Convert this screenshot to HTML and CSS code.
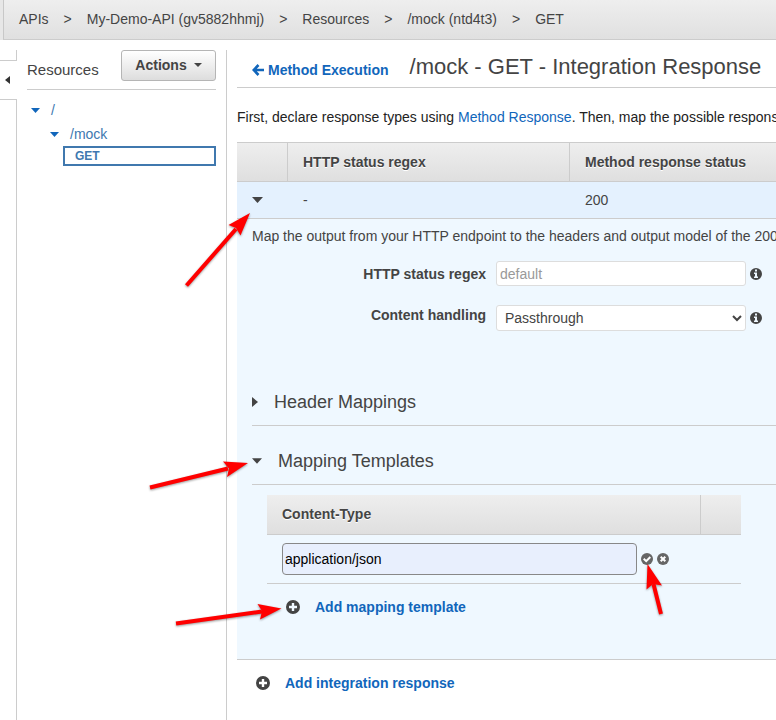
FILE: index.html
```html
<!DOCTYPE html>
<html lang="en">
<head>
<meta charset="utf-8">
<title>Integration Response</title>
<link rel="stylesheet" href="styles.css">
</head>
<body>
<svg class="defs" aria-hidden="true">
  <symbol id="down" viewBox="0 0 11 6"><path d="M0 0H11L5.500 6Z"/></symbol>
  <symbol id="plus" viewBox="0 0 14 14"><path fill-rule="evenodd" d="M7 0a7 7 0 1 0 0 14A7 7 0 0 0 7 0ZM5.800 3h2.400v2.800H11v2.400H8.200V11H5.800V8.200H3V5.800h2.800Z"/></symbol>
  <symbol id="info" viewBox="0 0 12 12"><path fill-rule="evenodd" d="M6 0a6 6 0 1 0 0 12A6 6 0 0 0 6 0ZM5 1.500h2v2H5ZM4 4.500h3v4h1V10H4V8.500h1V6H4Z"/></symbol>
</svg>
<nav class="crumbs" aria-label="Breadcrumb">
  <a href="#">APIs</a><span>&gt;</span><a href="#">My-Demo-API (gv5882hhmj)</a><span>&gt;</span><a href="#">Resources</a><span>&gt;</span><a href="#">/mock (ntd4t3)</a><span>&gt;</span><a href="#">GET</a>
</nav>
<div class="layout">
  <div class="rail">
    <button class="collapse" type="button" aria-label="Collapse"><svg width="5" height="8" viewBox="0 0 5 8"><path d="M5 0V8L0 4Z"/></svg></button>
  </div>
  <aside class="sidebar">
    <div class="side-head">
      <h2>Resources</h2>
      <button class="actions" type="button">Actions<svg width="8" height="4" viewBox="0 0 8 4"><path d="M0 0H8L4 4Z"/></svg></button>
    </div>
    <ul class="tree">
      <li class="node"><svg width="9" height="5"><use href="#down"/></svg><a href="#">/</a></li>
      <li class="node child"><svg width="9" height="5"><use href="#down"/></svg><a href="#">/mock</a></li>
      <li class="selected"><a href="#">GET</a></li>
    </ul>
  </aside>
  <main class="main">
    <header class="title">
      <a class="back" href="#"><svg width="12" height="12" viewBox="0 0 12 12"><path d="M6.500 1L1.700 6L6.500 11M2 6H12" fill="none" stroke="currentColor" stroke-width="2.600"/></svg>Method Execution</a>
      <h1>/mock - GET - Integration Response</h1>
    </header>
    <p class="intro">First, declare response types using <a href="#">Method Response</a>. Then, map the possible responses</p>
    <table class="responses">
      <thead><tr><th class="toggle"></th><th class="regex">HTTP status regex</th><th>Method response status</th></tr></thead>
      <tbody><tr><td class="toggle"><svg width="11" height="6"><use href="#down"/></svg></td><td>-</td><td>200</td></tr></tbody>
    </table>
    <section class="details">
      <p class="hint">Map the output from your HTTP endpoint to the headers and output model of the 200</p>
      <div class="field first">
        <label for="regex">HTTP status regex</label>
        <input id="regex" type="text" placeholder="default">
        <svg width="12" height="12"><use href="#info"/></svg>
      </div>
      <div class="field">
        <label for="handling">Content handling</label>
        <select id="handling"><option>Passthrough</option></select>
        <svg width="12" height="12"><use href="#info"/></svg>
      </div>
      <h3 class="fold closed"><svg width="6" height="10" viewBox="0 0 6 10"><path d="M0 0V10L6 5Z"/></svg>Header Mappings</h3>
      <h3 class="fold"><svg width="10" height="6"><use href="#down"/></svg>Mapping Templates</h3>
      <table class="templates">
        <thead><tr><th>Content-Type</th><th class="last"></th></tr></thead>
        <tbody><tr><td colspan="2"><div class="edit">
          <input type="text" value="application/json" aria-label="Content-Type">
          <button type="button" aria-label="Confirm"><svg width="12" height="12" viewBox="0 0 12 12"><circle cx="6" cy="6" r="6"/><path class="mark" d="M2.700 5.800L5.200 8.200L9.300 4"/></svg></button>
          <button type="button" aria-label="Cancel"><svg width="12" height="12" viewBox="0 0 12 12"><circle cx="6" cy="6" r="6"/><path class="mark" d="M3.700 3.700L8.300 8.300M8.300 3.700L3.700 8.300"/></svg></button>
        </div></td></tr></tbody>
      </table>
      <a class="add inner" href="#"><svg width="14" height="14"><use href="#plus"/></svg>Add mapping template</a>
    </section>
    <a class="add" href="#"><svg width="14" height="14"><use href="#plus"/></svg>Add integration response</a>
  </main>
</div>
<svg class="arrows" width="776" height="720" viewBox="0 0 776 720" aria-hidden="true">
  <path d="M186.500 285.500L236 229M150 487.500L228 468.500M176 623.500L262 611.500M661 614L653.500 584"/>
  <g>
    <polygon points="250,213 228.500,225 236,228 240.500,235.500"/>
    <polygon points="248,463 223,461.500 229,468.500 227,477"/>
    <polygon points="281.500,608.500 257.500,604 262,611 260,619.500"/>
    <polygon points="647.500,564 646.500,589.500 653,584 662,585.500"/>
  </g>
</svg>
</body>
</html>
```
FILE: styles.css
```css
* { box-sizing: border-box; }

body {
  margin: 0;
  min-height: 100vh;
  display: flex;
  flex-direction: column;
  position: relative;
  overflow: hidden;
  background: #fff;
  color: #444;
  font: 14px/20px "Liberation Sans", Arial, sans-serif;
}

h1, h2, h3, p, ul { margin: 0; padding: 0; font-weight: 400; }
svg { flex: none; fill: currentColor; }
a { color: #1166bb; text-decoration: none; }
button, input, select { font: inherit; color: inherit; }
table { border-collapse: separate; border-spacing: 0; }

.defs { position: absolute; width: 0; height: 0; }

.crumbs {
  display: flex;
  gap: 15px;
  height: 40px;
  margin-left: 3px;
  padding: 9px 15px;
  border-left: 1px solid #c8c8c8;
  border-bottom: 1px solid #ccc;
  background: linear-gradient(#eee, #e0e0e0);
  box-shadow: -3px 0 #e7e7e7;
  white-space: nowrap;
}
.crumbs a { color: #444; }

.layout { flex: 1; display: flex; padding-top: 10px; }

.rail { width: 17px; flex: none; display: flex; flex-direction: column; }
.rail::before { content: ""; height: 10px; border-right: 1px solid #ccc; }
.rail::after { content: ""; flex: 1; border-right: 1px solid #ccc; }
.collapse {
  height: 40px;
  padding: 0 7px 0 5px;
  border: solid #ccc;
  border-width: 1px 0;
  background: #fff;
  color: #333;
  display: flex;
  align-items: center;
}

.sidebar { width: 210px; flex: none; padding: 0 10px; border-right: 1px solid #ccc; }
.side-head {
  display: flex;
  justify-content: space-between;
  align-items: flex-start;
  height: 40px;
  border-bottom: 1px solid #ccc;
}
.side-head h2 { font-size: 15px; line-height: 40px; }
.actions {
  width: 95px;
  height: 31px;
  display: flex;
  align-items: center;
  justify-content: center;
  gap: 7px;
  padding: 0 6px 2px;
  border: 1px solid #b5b5b5;
  border-radius: 3px;
  background: linear-gradient(#fff, #ddd);
  font-weight: 700;
}
.tree { padding-top: 8px; list-style: none; }
.node { display: flex; align-items: center; gap: 11px; height: 24px; padding-left: 4px; color: #1166bb; }
.node.child { padding-left: 23px; }
.tree a { color: #4078b0; }
.selected {
  height: 20px;
  margin-left: 36px;
  padding-left: 10px;
  border: 2px solid #4078ae;
  font-size: 12px;
  line-height: 16px;
}
.selected a { font-weight: 700; }

.main { flex: 1; min-width: 0; margin-left: 10px; white-space: nowrap; }
.title {
  display: flex;
  align-items: flex-start;
  gap: 21px;
  height: 38px;
  padding-left: 15px;
  border-bottom: 1px solid #ccc;
}
.title h1 { font-size: 22px; line-height: 34px; }
.back { display: flex; align-items: center; gap: 4px; padding-top: 10px; font-weight: 700; }
.intro { margin: 19px 0 15px; color: #222; }

.responses { width: 100%; table-layout: fixed; }
th {
  height: 40px;
  padding: 0 15px 1px;
  border-bottom: 1px solid #ccc;
  background: linear-gradient(#eee, #dfdfdf);
  text-align: left;
  text-shadow: 0 1px #fff;
}
th + th { border-left: 1px solid #ccc; }
.responses th { border-top: 1px solid #ccc; }
.responses .toggle { width: 50px; padding: 0 15px; }
.responses .regex { width: 282px; }
.responses td { height: 37px; padding: 0 16px; background: #e4f1fe; border-bottom: 1px solid #ccc; }
td svg { display: block; }

.details { padding: 7px 0 42px 15px; background: #eff8ff; border-bottom: 1px solid #ccc; }
.field {
  display: grid;
  grid-template-columns: 234px 250px 12px;
  column-gap: 10px;
  align-items: center;
  margin-top: 19px;
}
.field.first { margin-top: 15px; }
.field label { text-align: right; font-weight: 700; }
.field:not(.first) label { align-self: start; }
.field input, .field select {
  width: 250px;
  height: 25px;
  border: 1px solid #ddd;
  border-radius: 3px;
  background: #fff;
  padding: 0 3px;
}
.field select { height: 26px; padding: 0 4px; }
.field svg { margin-left: -6px; }
.field input::placeholder { color: #999; opacity: 1; }

.fold {
  display: flex;
  align-items: center;
  gap: 16px;
  height: 48px;
  margin-top: 47px;
  border-bottom: 1px solid #ccc;
  font-size: 18px;
}
.fold + .fold { margin-top: 11px; }

.templates { width: 474px; margin: 10px 0 0 15px; }
.templates .last { width: 41px; }
.templates td { padding: 8px 15px; border-bottom: 1px solid #ccc; }
.edit { display: flex; align-items: center; gap: 4px; }
.edit input {
  width: 355px;
  height: 32px;
  padding: 0 2px;
  border: 1px solid #888;
  border-radius: 4px;
  background: #e8effd;
  color: #000;
}
.edit button { border: 0; padding: 0; background: none; color: #666; }
.mark { fill: none; stroke: #fff; stroke-width: 2; }

.add { display: flex; align-items: center; gap: 15px; margin: 13px 0 0 19px; font-weight: 700; }
.add.inner { margin-left: 34px; }
.add svg { color: #444; }

.arrows { position: absolute; top: 0; left: 0; pointer-events: none; fill: #f00; filter: drop-shadow(0 1px 1px #0006); }
.arrows path { stroke: #f00; stroke-width: 4; }
```
